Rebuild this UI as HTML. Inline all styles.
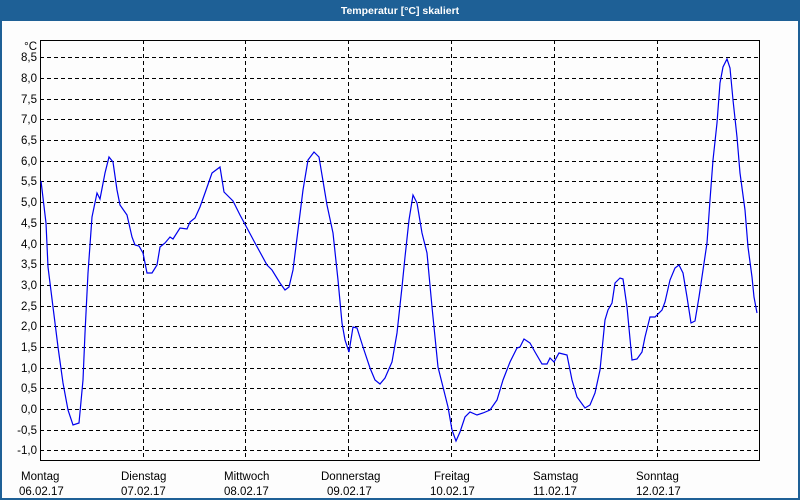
<!DOCTYPE html>
<html><head><meta charset="utf-8"><style>
html,body{margin:0;padding:0}
body{width:800px;height:500px;overflow:hidden;background:#1e6096;font-family:"Liberation Sans",sans-serif;}
</style></head><body>
<svg width="800" height="500" xmlns="http://www.w3.org/2000/svg" style="position:absolute;left:0;top:0">
<rect x="0" y="0" width="800" height="500" fill="#1e6096"/>
<text x="400" y="14" fill="#fff" font-size="10.5" font-weight="bold" text-anchor="middle" font-family="Liberation Sans, sans-serif">Temperatur [°C] skaliert</text>
<rect x="2" y="21" width="796" height="477" fill="#fdfdfd"/>
<g stroke="#000" stroke-width="1" stroke-dasharray="4,3" fill="none" shape-rendering="crispEdges">
<path d="M40 57.5H760M40 78.5H760M40 99.5H760M40 119.5H760M40 140.5H760M40 161.5H760M40 181.5H760M40 202.5H760M40 223.5H760M40 244.5H760M40 264.5H760M40 285.5H760M40 306.5H760M40 326.5H760M40 347.5H760M40 368.5H760M40 388.5H760M40 409.5H760M40 430.5H760M40 450.5H760"/>
<path d="M143.5 40V461M245.5 40V461M348.5 40V461M451.5 40V461M554.5 40V461M657.5 40V461"/>
</g>
<rect x="40.5" y="40.5" width="719" height="420" fill="none" stroke="#000" stroke-width="1" shape-rendering="crispEdges"/>
<g font-size="11.5" fill="#000" text-anchor="end" font-family="Liberation Sans, sans-serif">
<text x="37" y="50">°C</text>
<text x="37" y="61">8,5</text><text x="37" y="82">8,0</text><text x="37" y="103">7,5</text><text x="37" y="123">7,0</text>
<text x="37" y="144">6,5</text><text x="37" y="165">6,0</text><text x="37" y="185">5,5</text><text x="37" y="206">5,0</text>
<text x="37" y="227">4,5</text><text x="37" y="248">4,0</text><text x="37" y="268">3,5</text><text x="37" y="289">3,0</text>
<text x="37" y="310">2,5</text><text x="37" y="330">2,0</text><text x="37" y="351">1,5</text><text x="37" y="372">1,0</text>
<text x="37" y="392">0,5</text><text x="37" y="413">0,0</text><text x="37" y="434">-0,5</text><text x="37" y="454">-1,0</text>
</g>
<g font-size="11.5" fill="#000" font-family="Liberation Sans, sans-serif">
<text x="21" y="480">Montag</text><text x="19" y="495">06.02.17</text>
<text x="121" y="480">Dienstag</text><text x="121" y="495">07.02.17</text>
<text x="224" y="480">Mittwoch</text><text x="224" y="495">08.02.17</text>
<text x="321" y="480">Donnerstag</text><text x="327" y="495">09.02.17</text>
<text x="434" y="480">Freitag</text><text x="430" y="495">10.02.17</text>
<text x="533" y="480">Samstag</text><text x="533" y="495">11.02.17</text>
<text x="636" y="480">Sonntag</text><text x="636" y="495">12.02.17</text>
</g>
<polyline fill="none" stroke="#0000ee" stroke-width="1.2" points="41,181 46,223 48,267 53,307 58,347 63,383 68,410 73,425 79,423 83,380 85,333 88,273 92,217 97,193 100,199 105,173 109,157 113,162 117,190 120,205 127,215 132,237 135,245 139,246 143,253 147,273 152,273 157,265 160,247 165,243 170,237 173,239 180,228 187,229 190,222 195,218 200,207 205,193 212,173 220,167 224,192 233,201 240,215 247,228 255,243 267,265 272,270 280,283 285,290 289,287 293,270 298,230 303,190 308,160 314,152 319,157 327,205 333,233 338,280 342,323 345,340 349,352 353,327 357,328 363,347 370,368 375,380 380,384 385,378 392,362 397,333 402,287 405,257 409,220 413,195 417,203 422,233 427,253 432,307 438,367 443,387 448,407 452,430 456,441 460,432 465,417 470,412 477,415 483,413 490,410 497,400 503,380 510,362 517,348 520,347 524,339 530,343 535,352 542,364 547,364 550,358 554,362 559,353 567,355 572,380 577,397 585,408 590,405 595,393 600,370 605,320 608,310 612,303 615,283 620,278 623,279 627,307 632,360 637,359 642,352 645,337 650,317 655,317 662,310 665,302 670,280 675,268 679,265 683,273 687,297 691,323 695,321 699,297 703,270 707,243 710,200 713,160 717,123 720,83 723,67 727,59 730,68 733,100 737,137 740,173 745,210 748,247 752,277 754,297 757,313"/>
</svg>
</body></html>
